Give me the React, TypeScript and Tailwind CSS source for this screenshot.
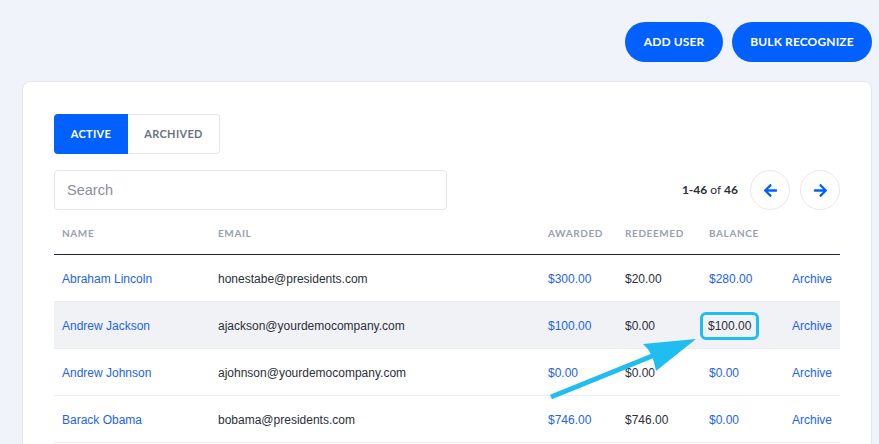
import { FaArrowLeft, FaArrowRight } from 'react-icons/fa';

type Row = {
  name: string;
  email: string;
  awarded: string;
  redeemed: string;
  balance: string;
  balanceBlue: boolean;
};

const rows: Row[] = [
  { name: 'Abraham Lincoln', email: 'honestabe@presidents.com', awarded: '$300.00', redeemed: '$20.00', balance: '$280.00', balanceBlue: true },
  { name: 'Andrew Jackson', email: 'ajackson@yourdemocompany.com', awarded: '$100.00', redeemed: '$0.00', balance: '$100.00', balanceBlue: false },
  { name: 'Andrew Johnson', email: 'ajohnson@yourdemocompany.com', awarded: '$0.00', redeemed: '$0.00', balance: '$0.00', balanceBlue: true },
  { name: 'Barack Obama', email: 'bobama@presidents.com', awarded: '$746.00', redeemed: '$746.00', balance: '$0.00', balanceBlue: true },
];

const cols = 'grid grid-cols-[156px_330px_77px_84px_83px_1fr]';
const head = "font-['Lato',sans-serif] text-[10px] font-bold tracking-[0.06em] text-[#9aa1ad] pl-2";

export default function App() {
  return (
    <div className="min-h-screen bg-[#f0f3fa] pl-[22px] pr-[7px] pt-[22px] font-['Liberation_Sans',Arial,sans-serif]">
      <div className="flex justify-end gap-[9px]">
        <button className="h-10 w-[98px] rounded-full bg-[#0260fe] text-white text-[12px] font-bold tracking-[0.01em] font-['Lato',sans-serif]">
          ADD USER
        </button>
        <button className="h-10 w-[140px] rounded-full bg-[#0260fe] text-white text-[12px] font-bold tracking-[0.01em] font-['Lato',sans-serif]">
          BULK RECOGNIZE
        </button>
      </div>

      <div className="mt-[19px] rounded-lg border border-[#e3e6ec] bg-white px-[31px] pt-[32px] pb-10">
        <div className="flex">
          <button className="h-10 w-[74px] rounded-l bg-[#0260fe] text-white text-[11px] font-bold tracking-[0.03em] font-['Lato',sans-serif]">
            ACTIVE
          </button>
          <button className="h-10 w-[92px] rounded-r border border-l-0 border-[#e3e6ec] text-[#6b7380] text-[11px] font-bold tracking-[0.03em] font-['Lato',sans-serif]">
            ARCHIVED
          </button>
        </div>

        <div className="mt-4 flex items-center justify-between">
          <div className="h-10 w-[393px] rounded border border-[#e3e6ec] flex items-center pl-3 pt-[2px] text-[14.5px] text-[#8b9099]">
            Search
          </div>
          <div className="flex items-center">
            <span className="text-[12px] text-[#2b2f3a] font-['Lato',sans-serif]">
              <b>1-46</b> of <b>46</b>
            </span>
            <button className="ml-3 h-10 w-10 rounded-full border border-[#e6e8ec] flex items-center justify-center text-[#0260fe]">
              <FaArrowLeft size={15} />
            </button>
            <button className="ml-[10px] h-10 w-10 rounded-full border border-[#e6e8ec] flex items-center justify-center text-[#0260fe]">
              <FaArrowRight size={15} />
            </button>
          </div>
        </div>

        <div className="relative">
          <div className={`${cols} h-[44px] items-center border-b-[1.5px] border-[#232838] mt-[1px]`}>
            <div className={`${head} pt-[2px]`}>NAME</div>
            <div className={`${head} pt-[2px]`}>EMAIL</div>
            <div className={`${head} pt-[2px]`}>AWARDED</div>
            <div className={`${head} pt-[2px]`}>REDEEMED</div>
            <div className={`${head} pt-[2px]`}>BALANCE</div>
            <div />
          </div>

          {rows.map((r, i) => (
            <div
              key={r.name}
              className={`${cols} h-[47px] items-center pt-[1px] text-[12px] border-b border-[#eceef2] ${i === 1 ? 'bg-[#f1f2f6]' : ''}`}
            >
              <div className="pl-2 text-[#1c63f2]">{r.name}</div>
              <div className="pl-2 text-[#2b2f3a]">{r.email}</div>
              <div className="pl-2 text-[#1c63f2]">{r.awarded}</div>
              <div className="pl-2 text-[#2b2f3a]">{r.redeemed}</div>
              <div className={`pl-2 ${r.balanceBlue ? 'text-[#1c63f2]' : 'text-[#2b2f3a]'}`}>
                {i === 1 ? (
                  <span className="-ml-[9px] inline-block rounded-md border-[3px] border-[#1fbdf0] px-[5px] py-[2px]">
                    {r.balance}
                  </span>
                ) : (
                  r.balance
                )}
              </div>
              <div className="text-right pr-2 text-[#1c63f2]">Archive</div>
            </div>
          ))}

          <svg
            className="absolute left-0 top-0 pointer-events-none"
            width="786"
            height="240"
            viewBox="54 211 786 240"
          >
            <line x1="551" y1="397" x2="662" y2="352" stroke="#1fbdf0" strokeWidth="5" strokeLinecap="butt" />
            <path d="M696 339 L643 344 Q653 352 656 371 Z" fill="#1fbdf0" />
          </svg>
        </div>
      </div>
    </div>
  );
}
